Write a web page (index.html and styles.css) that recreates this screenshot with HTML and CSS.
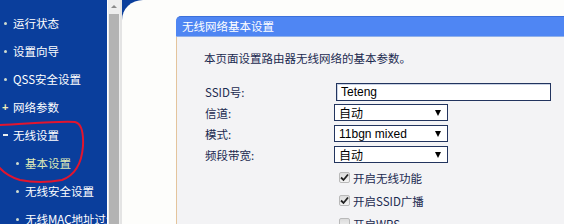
FILE: index.html
```html
<!DOCTYPE html>
<html lang="zh-CN">
<head>
<meta charset="utf-8">
<title>无线网络基本设置</title>
<link rel="stylesheet" href="styles.css">
</head>
<body>
<div class="page">
  <nav class="sidebar">
    <ul class="menu">
      <li class="item"><span class="mark dot"></span>运行状态</li>
      <li class="item"><span class="mark dot"></span>设置向导</li>
      <li class="item"><span class="mark dot"></span>QSS安全设置</li>
      <li class="item"><span class="mark plus">+</span>网络参数</li>
      <li class="item"><span class="mark minus"></span>无线设置</li>
      <li class="item sub active"><span class="mark dot"></span>基本设置</li>
      <li class="item sub"><span class="mark dot"></span>无线安全设置</li>
      <li class="item sub"><span class="mark dot"></span>无线MAC地址过滤</li>
    </ul>
    <svg class="annot" width="107" height="224" viewBox="0 0 107 224">
      <path d="M -2 125 C 25 124 55 121 75 122 Q 84 124 83 146 Q 81 173 62 180 Q 40 184 20 180 Q 6 176 -2 166" fill="none" stroke="#e2152e" stroke-width="2" stroke-linecap="round"/>
    </svg>
  </nav>
  <div class="scrollbar"><span class="arrow"></span><span class="thumb"></span></div>
  <main class="main">
    <div class="canvas">
      <section class="panel">
        <header class="panel-head">无线网络基本设置</header>
        <div class="panel-body">
          <p class="desc">本页面设置路由器无线网络的基本参数。</p>
          <div class="form">
            <span class="label">SSID号:</span>
            <div class="field text-field">Teteng</div>
            <span class="label">信道:</span>
            <div class="field select"><span class="val">自动</span><span class="caret"></span></div>
            <span class="label">模式:</span>
            <div class="field select"><span class="val">11bgn mixed</span><span class="caret"></span></div>
            <span class="label">频段带宽:</span>
            <div class="field select"><span class="val">自动</span><span class="caret"></span></div>
          </div>
          <ul class="checks">
            <li class="check"><span class="box on"><svg width="9" height="9" viewBox="0 0 9 9"><path d="M1 4.5 L3.5 7 L8 1.5" fill="none" stroke="#222" stroke-width="1.8"/></svg></span>开启无线功能</li>
            <li class="check"><span class="box on"><svg width="9" height="9" viewBox="0 0 9 9"><path d="M1 4.5 L3.5 7 L8 1.5" fill="none" stroke="#222" stroke-width="1.8"/></svg></span>开启SSID广播</li>
            <li class="check"><span class="box"></span>开启WPS</li>
          </ul>
        </div>
      </section>
    </div>
  </main>
</div>
</body>
</html>
```
FILE: styles.css
```css
html, body {
  margin: 0;
  padding: 0;
  height: 224px;
  overflow: hidden;
  background: #ffffff;
  font-family: "Noto Sans CJK SC", "Liberation Sans", sans-serif;
}
.page {
  display: flex;
  height: 224px;
}
.sidebar {
  position: relative;
  width: 107px;
  flex: none;
  background: #0a3e9c;
  overflow: hidden;
}
.menu {
  list-style: none;
  margin: 0;
  padding: 9px 0 0 0;
}
.item {
  height: 28px;
  display: flex;
  align-items: center;
  color: #ffffff;
  font-size: 11.5px;
  white-space: nowrap;
}
.item.sub {
  padding-left: 12px;
}
.item.active {
  color: #dfeab8;
}
.mark {
  width: 13px;
  flex: none;
  display: flex;
  align-items: center;
}
.dot::before {
  content: "";
  width: 3px;
  height: 3px;
  border-radius: 50%;
  background: #cfdccf;
  margin-left: 4px;
}
.plus {
  color: #f2efb8;
  font-family: "Liberation Sans", sans-serif;
  font-weight: bold;
  font-size: 11px;
  padding-left: 2px;
  box-sizing: border-box;
}
.minus::before {
  content: "";
  width: 5px;
  height: 2px;
  background: #e8eef0;
  margin-left: 3px;
}
.annot {
  position: absolute;
  left: 0;
  top: 0;
  pointer-events: none;
}
.scrollbar {
  width: 15px;
  flex: none;
  box-sizing: border-box;
  border-left: 1px solid #ffffff;
  border-right: 2px solid #e4e4e4;
  background: #eeeeee;
  display: flex;
  flex-direction: column;
  align-items: center;
}
.arrow {
  margin-top: 5px;
  width: 0;
  height: 0;
  border-left: 3px solid transparent;
  border-right: 3px solid transparent;
  border-bottom: 3px solid #8a8a8a;
}
.thumb {
  flex: 1;
  width: 10px;
  margin-top: 6px;
  background: #b3b3b3;
}
.main {
  flex: 1;
  background: #0a3e9c;
  min-width: 0;
}
.canvas {
  height: 100%;
  box-sizing: border-box;
  background: #fdfdfb;
  border-top-left-radius: 21px 20px;
  padding: 16px 0 0 54px;
}
.panel {
  height: 100%;
  display: flex;
  flex-direction: column;
}
.panel-head {
  height: 21px;
  box-sizing: border-box;
  background: #4f86f3;
  border-top: 1px solid #3c70da;
  border-bottom: 1px solid #8fb0ea;
  border-top-left-radius: 5px;
  color: #ffffff;
  font-size: 11.5px;
  line-height: 19px;
  padding-left: 6px;
}
.panel-body {
  flex: 1;
  background: #f3f3f5;
  border-left: 1px solid #e4c49c;
  padding: 13px 0 0 27px;
}
.desc {
  margin: 0 0 17px 0;
  font-size: 11.5px;
  line-height: 16px;
  color: #1b2a50;
}
.form {
  display: grid;
  grid-template-columns: 130px auto;
  grid-auto-rows: 17px;
  row-gap: 4px;
  justify-items: start;
  align-items: center;
}
.label {
  padding-left: 1px;
  font-size: 11.5px;
  color: #1b2a50;
}
.field {
  height: 17px;
  box-sizing: border-box;
  border: 1px solid #22345e;
  background: #ffffff;
  color: #000000;
  font-size: 12px;
  font-family: "Liberation Sans", "Noto Sans CJK SC", sans-serif;
  display: flex;
  align-items: center;
}
.text-field {
  width: 215px;
  height: 18px;
  margin-left: 2px;
  padding-left: 4px;
  box-shadow: inset 1px 1px 0 #c9d2e4;
}
.select {
  width: 114px;
  padding: 0 6px 0 4px;
  justify-content: space-between;
}
.caret {
  width: 0;
  height: 0;
  border-left: 3px solid transparent;
  border-right: 3px solid transparent;
  border-top: 6px solid #000000;
}
.checks {
  list-style: none;
  margin: 3px 0 0 0;
  padding: 0 0 0 135px;
}
.check {
  height: 23px;
  display: flex;
  align-items: center;
  font-size: 11.5px;
  color: #1b2a50;
}
.box {
  width: 11px;
  height: 11px;
  box-sizing: border-box;
  border: 1px solid #b9b9b9;
  border-radius: 2px;
  background: linear-gradient(#dcdcdc, #f4f4f4);
  margin-right: 3px;
  display: flex;
  align-items: center;
  justify-content: center;
}
```
